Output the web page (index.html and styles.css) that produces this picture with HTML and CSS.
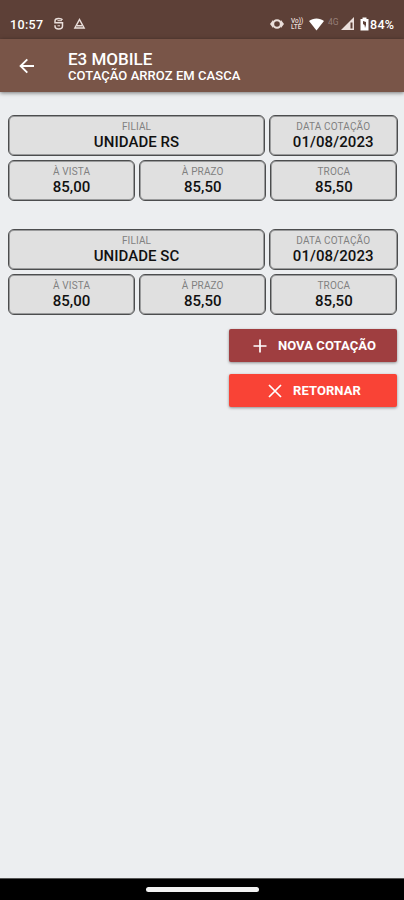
FILE: index.html
```html
<!DOCTYPE html>
<html lang="pt-BR">
<head>
<meta charset="utf-8">
<title>E3 Mobile</title>
<link rel="stylesheet" href="styles.css">
</head>
<body>
<div class="status">
  <span class="time">10:57</span>
  <svg class="s-left" width="36" height="16" viewBox="0 0 36 16" fill="none" stroke="#eadfdb" stroke-width="1.5">
    <path d="M10.500 3.800Q9.500 2.500 6.700 2.500Q3 2.500 3 5V6.800H10.500V10Q10.500 13 6.700 13Q3 13 3 10V9.300"/>
    <path d="M5.500 4.700h4.500M5.500 9.800h2.500" stroke-width="1"/>
    <path d="M27.500 3.500l4.600 8.500h-9.200zM25 9.800h5"/>
  </svg>
  <div class="s-right">
    <svg width="16" height="14" viewBox="0 0 16 14"><path fill="#eadfdb" d="M1 7l3-4v8zM15 7l-3-4v8z"/><circle cx="8" cy="7" r="3.800" fill="#5d4037" stroke="#eadfdb" stroke-width="2"/></svg>
    <span class="volte">Vo))<br>LTE</span>
    <svg class="wifi" width="15" height="13" viewBox="0 0 15 13"><path fill="#fff" d="M0 3C4-.5 11-.5 15 3L7.500 12.500z"/></svg>
    <span class="g4">4G</span>
    <svg class="signal" width="14" height="14" viewBox="0 0 14 14"><path fill="#eadfdb" d="M0 13L13 0v13z"/><path fill="#5d4037" d="M9.500 5.500h2v6h-2z"/></svg>
    <svg class="battery" width="9" height="14" viewBox="0 0 9 14"><path fill="#fff" d="M.5 2H2.500V.5h4V2h2v11.500h-8z"/><path fill="#5d4037" d="M3 4l3 1v3l-1 3-.5-3L3 7z"/></svg>
    <span class="pct">84%</span>
  </div>
</div>
<header class="bar">
  <svg class="back" width="16" height="16" viewBox="0 0 16 16" fill="none" stroke="#fff" stroke-width="1.900"><path d="M15 8H2M8.300 1.300L1.600 8l6.700 6.700"/></svg>
  <div class="titles">
    <h1>E3 MOBILE</h1>
    <h2>COTAÇÃO ARROZ EM CASCA</h2>
  </div>
</header>
<main>
  <section class="quote">
    <div class="row top">
      <div class="box"><small>FILIAL</small><b>UNIDADE RS</b></div>
      <div class="box"><small>DATA COTAÇÃO</small><b class="date">01/08/2023</b></div>
    </div>
    <div class="row prices">
      <div class="box"><small>À VISTA</small><b>85,00</b></div>
      <div class="box"><small>À PRAZO</small><b>85,50</b></div>
      <div class="box"><small>TROCA</small><b>85,50</b></div>
    </div>
  </section>
  <section class="quote">
    <div class="row top">
      <div class="box"><small>FILIAL</small><b>UNIDADE SC</b></div>
      <div class="box"><small>DATA COTAÇÃO</small><b class="date">01/08/2023</b></div>
    </div>
    <div class="row prices">
      <div class="box"><small>À VISTA</small><b>85,00</b></div>
      <div class="box"><small>À PRAZO</small><b>85,50</b></div>
      <div class="box"><small>TROCA</small><b>85,50</b></div>
    </div>
  </section>
  <div class="actions">
    <button class="btn new"><svg width="14" height="14" viewBox="0 0 14 14" stroke="#fff" stroke-width="1.700"><path d="M7 .5v13M.5 7h13"/></svg><span>NOVA COTAÇÃO</span></button>
    <button class="btn close"><svg width="14" height="14" viewBox="0 0 14 14" stroke="#fff" stroke-width="1.700"><path d="M1 1l12 12M13 1L1 13"/></svg><span>RETORNAR</span></button>
  </div>
</main>
<footer class="nav"><div class="pill"></div></footer>
</body>
</html>
```
FILE: styles.css
```css
* { box-sizing: border-box; }
body {
  margin: 0;
  height: 900px;
  display: flex;
  flex-direction: column;
  background: #eceef0;
  font-family: Roboto, sans-serif;
  overflow: hidden;
}
.status {
  height: 39px;
  flex: none;
  display: flex;
  align-items: center;
  padding: 9px 9px 0 10px;
  background: #5d4037;
  color: #fff;
}
.time { font-size: 12.5px; font-weight: 500; letter-spacing: .35px; width: 34px; }
.s-left { margin-left: 8px; }
.s-right { margin-left: auto; display: flex; align-items: center; }
.volte { font-size: 6.5px; line-height: 6.5px; font-weight: 500; margin-left: 6px; width: 15px; color: #eadfdb; }
.wifi { margin-left: 3px; }
.g4 { font-size: 8.5px; color: #967f77; margin: -5px 0 0 4px; width: 12px; }
.signal { margin-left: 1px; }
.battery { margin-left: 5px; }
.pct { font-size: 12.5px; font-weight: 500; letter-spacing: .3px; width: 25px; margin-left: 1px; }
.bar {
  height: 53px;
  flex: none;
  display: flex;
  align-items: center;
  padding-left: 19px;
  background: #795548;
  color: #fff;
  box-shadow: 0 1px 4px rgba(0, 0, 0, .5);
}
.titles { margin-left: 33px; padding-top: 2px; }
h1, h2 { margin: 0; font-weight: 500; white-space: nowrap; }
h1 { font-size: 17px; line-height: 18px; }
h2 { font-size: 13px; line-height: 16px; letter-spacing: .06px; }
main { flex: 1; padding: 22.500px 6.500px 0 8px; }
.quote { margin-bottom: 28px; }
.row { display: grid; gap: 4px; height: 41px; }
.top { grid-template-columns: 257px 1fr; margin-bottom: 4.500px; }
.prices { grid-template-columns: repeat(3, 1fr); }
.quote + .quote .top { margin-bottom: 4px; }
.box {
  border: 1px solid #4c4d4e;
  box-shadow: inset 0 0 0 1px #9a9b9c;
  border-radius: 6px;
  background: #e0e0e0;
  display: flex;
  flex-direction: column;
  align-items: center;
  padding-top: 5px;
}
small { font-size: 10px; line-height: 12px; color: #808080; letter-spacing: .15px; }
b { font-size: 15px; line-height: 18px; font-weight: 500; color: #111; letter-spacing: .05px; }
.date { letter-spacing: .1px; }
.actions { display: flex; flex-direction: column; align-items: flex-end; gap: 12px; margin: -14px .5px 0 0; }
.btn {
  width: 168px;
  height: 33px;
  border: 0;
  border-radius: 2px;
  display: flex;
  align-items: center;
  justify-content: center;
  gap: 11px;
  padding: 0 0 0 3px;
  color: #fff;
  font: 700 13px Roboto, sans-serif;
  letter-spacing: .08px;
  box-shadow: 0 1px 3px rgba(0, 0, 0, .4);
}
.new { background: #9f3e40; }
.close { background: #f94336; }
.nav {
  height: 22px;
  flex: none;
  background: #000;
  border-top: 1px solid #555;
  display: flex;
  justify-content: center;
  padding-top: 8px;
}
.pill { width: 113px; height: 5px; border-radius: 3px; background: #f2f2f2; }
```
